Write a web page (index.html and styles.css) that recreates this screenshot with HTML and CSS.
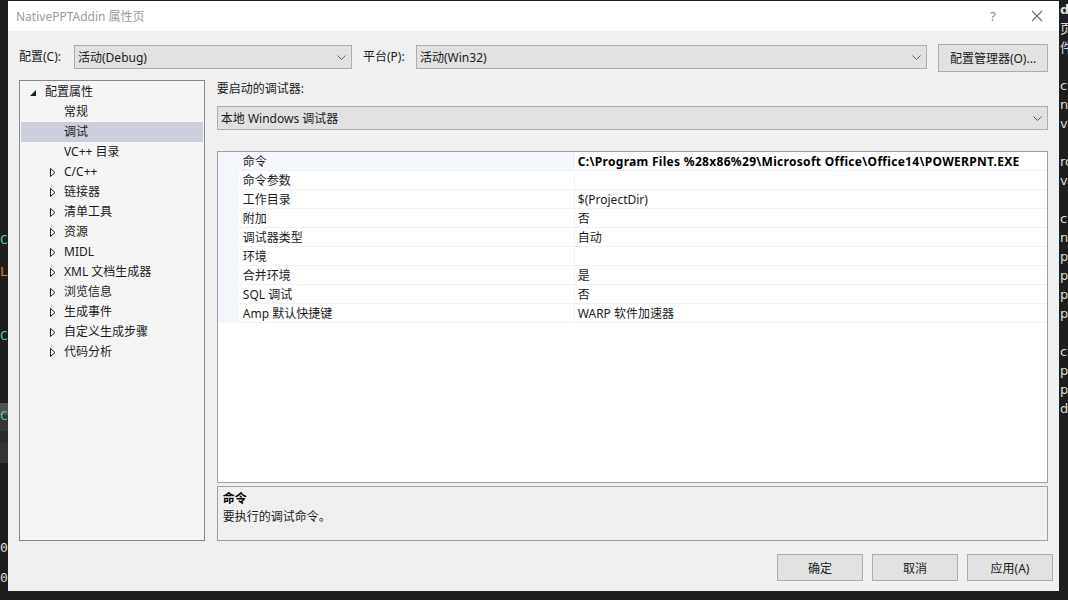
FILE: index.html
```html
<!DOCTYPE html>
<html lang="zh-CN">
<head>
    <meta charset="UTF-8">
    <title>NativePPTAddin 属性页</title>
    <link rel="stylesheet" href="styles.css">
</head>
<body>

    <!-- editor behind the dialog -->
    <div class="backdrop">
        <div class="band"></div>
        <span class="frag teal" style="top:232px">C</span>
        <span class="frag orange" style="top:264px">L</span>
        <span class="frag teal" style="top:328px">C</span>
        <span class="frag teal" style="top:408px">C</span>
        <span class="frag light" style="top:540px">0.</span>
        <span class="frag light" style="top:570px">0.</span>
        <div class="code-right">
            <span>d</span><span>页</span><span>件</span><span>&nbsp;</span><span>ct</span><span>n.</span><span>ve</span><span>&nbsp;</span><span>ro</span><span>ve</span><span>&nbsp;</span><span>ct</span><span>n.</span><span>p</span><span>p</span><span>p</span><span>p</span><span>&nbsp;</span><span>ct</span><span>p</span><span>p</span><span>d</span>
        </div>
    </div>

    <div class="dialog">
        <div class="titlebar">
            <span class="title">NativePPTAddin 属性页</span>
            <span class="tb-help">?</span>
            <span class="tb-close">
                <svg width="12" height="12" viewBox="0 0 12 12"><path d="M1 1 L11 11 M11 1 L1 11" stroke="#6d6d6d" stroke-width="1.1" fill="none"/></svg>
            </span>
        </div>

        <div class="body">
            <div class="config-row">
                <span class="field-label cfg-label">配置(C):</span>
                <div class="combo cfg-combo">
                    <span>活动(Debug)</span>
                    <svg class="chev" width="9" height="5" viewBox="0 0 9 5"><polyline points="0.5,0.5 4.5,4.5 8.5,0.5" stroke="#606060" fill="none"/></svg>
                </div>
                <span class="field-label plat-label">平台(P):</span>
                <div class="combo plat-combo">
                    <span>活动(Win32)</span>
                    <svg class="chev" width="9" height="5" viewBox="0 0 9 5"><polyline points="0.5,0.5 4.5,4.5 8.5,0.5" stroke="#606060" fill="none"/></svg>
                </div>
                <button class="btn mgr-btn">配置管理器(O)...</button>
            </div>

            <div class="main">
                <div class="tree">
                    <div class="node root">
                        <svg class="exp" width="6" height="6" viewBox="0 0 6 6"><polygon points="6,0 6,6 0,6" fill="#1e1e1e"/></svg>
                        <span>配置属性</span>
                    </div>
                    <div class="node leaf">常规</div>
                    <div class="node leaf selected">调试</div>
                    <div class="node leaf">VC++ 目录</div>
                    <div class="node branch"><svg class="col" width="6" height="9" viewBox="0 0 6 9"><polygon points="0.5,0.5 5,4.5 0.5,8.5" stroke="#1e1e1e" fill="none"/></svg><span>C/C++</span></div>
                    <div class="node branch"><svg class="col" width="6" height="9" viewBox="0 0 6 9"><polygon points="0.5,0.5 5,4.5 0.5,8.5" stroke="#1e1e1e" fill="none"/></svg><span>链接器</span></div>
                    <div class="node branch"><svg class="col" width="6" height="9" viewBox="0 0 6 9"><polygon points="0.5,0.5 5,4.5 0.5,8.5" stroke="#1e1e1e" fill="none"/></svg><span>清单工具</span></div>
                    <div class="node branch"><svg class="col" width="6" height="9" viewBox="0 0 6 9"><polygon points="0.5,0.5 5,4.5 0.5,8.5" stroke="#1e1e1e" fill="none"/></svg><span>资源</span></div>
                    <div class="node branch"><svg class="col" width="6" height="9" viewBox="0 0 6 9"><polygon points="0.5,0.5 5,4.5 0.5,8.5" stroke="#1e1e1e" fill="none"/></svg><span>MIDL</span></div>
                    <div class="node branch"><svg class="col" width="6" height="9" viewBox="0 0 6 9"><polygon points="0.5,0.5 5,4.5 0.5,8.5" stroke="#1e1e1e" fill="none"/></svg><span>XML 文档生成器</span></div>
                    <div class="node branch"><svg class="col" width="6" height="9" viewBox="0 0 6 9"><polygon points="0.5,0.5 5,4.5 0.5,8.5" stroke="#1e1e1e" fill="none"/></svg><span>浏览信息</span></div>
                    <div class="node branch"><svg class="col" width="6" height="9" viewBox="0 0 6 9"><polygon points="0.5,0.5 5,4.5 0.5,8.5" stroke="#1e1e1e" fill="none"/></svg><span>生成事件</span></div>
                    <div class="node branch"><svg class="col" width="6" height="9" viewBox="0 0 6 9"><polygon points="0.5,0.5 5,4.5 0.5,8.5" stroke="#1e1e1e" fill="none"/></svg><span>自定义生成步骤</span></div>
                    <div class="node branch"><svg class="col" width="6" height="9" viewBox="0 0 6 9"><polygon points="0.5,0.5 5,4.5 0.5,8.5" stroke="#1e1e1e" fill="none"/></svg><span>代码分析</span></div>
                </div>

                <div class="page">
                    <div class="page-label">要启动的调试器:</div>
                    <div class="combo debugger-combo">
                        <span>本地 Windows 调试器</span>
                        <svg class="chev" width="9" height="5" viewBox="0 0 9 5"><polyline points="0.5,0.5 4.5,4.5 8.5,0.5" stroke="#606060" fill="none"/></svg>
                    </div>

                    <div class="prop-grid">
                        <div class="row current"><div class="gutter"></div><div class="name">命令</div><div class="value bold">C:\Program Files %28x86%29\Microsoft Office\Office14\POWERPNT.EXE</div></div>
                        <div class="row"><div class="gutter"></div><div class="name">命令参数</div><div class="value"></div></div>
                        <div class="row"><div class="gutter"></div><div class="name">工作目录</div><div class="value">$(ProjectDir)</div></div>
                        <div class="row"><div class="gutter"></div><div class="name">附加</div><div class="value">否</div></div>
                        <div class="row"><div class="gutter"></div><div class="name">调试器类型</div><div class="value">自动</div></div>
                        <div class="row"><div class="gutter"></div><div class="name">环境</div><div class="value"></div></div>
                        <div class="row"><div class="gutter"></div><div class="name">合并环境</div><div class="value">是</div></div>
                        <div class="row"><div class="gutter"></div><div class="name">SQL 调试</div><div class="value">否</div></div>
                        <div class="row"><div class="gutter"></div><div class="name">Amp 默认快捷键</div><div class="value">WARP 软件加速器</div></div>
                    </div>

                    <div class="desc">
                        <div class="desc-title">命令</div>
                        <div class="desc-text">要执行的调试命令。</div>
                    </div>
                </div>
            </div>

            <div class="footer">
                <button class="btn">确定</button>
                <button class="btn">取消</button>
                <button class="btn">应用(A)</button>
            </div>
        </div>
    </div>

</body>
</html>
```

FILE: styles.css
```css
html, body {
    margin: 0;
    padding: 0;
}

body {
    width: 1068px;
    height: 600px;
    overflow: hidden;
    background: #1e1e1e;
    font-family: "Noto Sans", "Noto Sans CJK SC", sans-serif;
    font-size: 12px;
    color: #1b1b1b;
    position: relative;
}

/* --- editor showing around the dialog --- */
.backdrop {
    position: absolute;
    inset: 0;
}

.band {
    position: absolute;
    left: 0;
    top: 403px;
    width: 8px;
    height: 60px;
    background: linear-gradient(to bottom, #505050 0, #505050 12px, #383838 12px, #383838 28px, #2a2a2a 28px, #2a2a2a 40px, #333 40px);
}

.frag {
    position: absolute;
    left: 0;
    font-family: "DejaVu Sans Mono", monospace;
    font-size: 13px;
    line-height: 16px;
}

.teal { color: #4ec9b0; }
.orange { color: #d7794a; }
.light { color: #dcdcdc; }

.code-right {
    position: absolute;
    left: 1060px;
    top: 0;
    display: flex;
    flex-direction: column;
    font-family: "DejaVu Sans", "Noto Sans CJK SC", sans-serif;
    font-size: 13px;
    line-height: 19px;
    color: #dcdcdc;
}

.code-right span:first-child { font-weight: bold; }

/* --- dialog window --- */
.dialog {
    position: absolute;
    left: 8px;
    top: 1px;
    width: 1051px;
    height: 590px;
    background: #f0f0f0;
    display: flex;
    flex-direction: column;
}

.titlebar {
    height: 30px;
    background: #ffffff;
    display: flex;
    align-items: center;
    flex-shrink: 0;
}

.title {
    margin-left: 8px;
    color: #9a9a9a;
    font-size: 12px;
    flex: 1;
}

.tb-help {
    width: 20px;
    text-align: center;
    color: #8a8a8a;
    font-size: 13px;
    margin-right: 28px;
}

.tb-close {
    display: flex;
    margin-right: 16px;
}

.body {
    flex: 1;
    padding: 13px 11px 0 11px;
    display: flex;
    flex-direction: column;
}

/* --- configuration row --- */
.config-row {
    display: flex;
    align-items: flex-start;
    height: 28px;
}

.field-label {
    line-height: 26px;
    white-space: nowrap;
}

.cfg-label { width: 55px; }
.plat-label { width: 53px; margin-left: 11px; }

.combo {
    box-sizing: border-box;
    height: 24px;
    background: #e1e1e1;
    border: 1px solid #adadad;
    display: flex;
    align-items: center;
    justify-content: space-between;
    padding: 0 5px 0 3px;
}

.config-row .combo { margin-top: 1px; }

.cfg-combo { width: 278px; }
.plat-combo { width: 511px; }

.chev { flex-shrink: 0; }

.btn {
    box-sizing: border-box;
    height: 27px;
    background: #e1e1e1;
    border: 1px solid #adadad;
    font-family: inherit;
    font-size: 12px;
    color: #1b1b1b;
    padding: 0;
}

.mgr-btn {
    width: 110px;
    height: 28px;
    margin-left: 11px;
}

/* --- tree + page --- */
.main {
    display: flex;
    margin-top: 8px;
    height: 461px;
}

.tree {
    box-sizing: border-box;
    width: 186px;
    height: 461px;
    border: 1px solid #828790;
    background: #f5f5f5;
    padding-top: 1px;
}

.node {
    height: 20px;
    line-height: 20px;
    display: flex;
    align-items: center;
    white-space: nowrap;
    margin: 0 1px;
}

.root .exp { margin-left: 9px; margin-right: 9px; margin-top: 2px; }
.leaf { padding-left: 43px; }
.branch .col { margin-left: 29px; margin-right: 8px; }

.node.selected {
    background: #cccedb;
}

.page {
    margin-left: 12px;
    width: 832px;
    display: flex;
    flex-direction: column;
}

.page-label {
    height: 18px;
    line-height: 18px;
    margin-bottom: 8px;
}

.debugger-combo {
    width: 831px;
    margin-bottom: 21px;
}

/* --- property grid --- */
.prop-grid {
    box-sizing: border-box;
    height: 332px;
    border: 1px solid #a0a0a0;
    background: #ffffff;
}

.row {
    display: flex;
    height: 19px;
    line-height: 20px;
}

.row .gutter {
    width: 21px;
    flex-shrink: 0;
    background: #f4f7fb;
}

.row .name {
    width: 336px;
    box-sizing: border-box;
    padding-left: 4px;
    border-bottom: 1px solid #eef1f6;
    border-right: 1px solid #eef1f6;
}

.row .value {
    flex: 1;
    padding-left: 3px;
    white-space: nowrap;
    border-bottom: 1px solid #eef1f6;
}

.row.current .name {
    background: #f4f7fb;
}

.value.bold {
    font-weight: bold;
    color: #000;
    letter-spacing: 0.3px;
}

/* --- description pane --- */
.desc {
    box-sizing: border-box;
    margin-top: 3px;
    height: 55px;
    border: 1px solid #a0a0a0;
    background: #f0f0f0;
    padding: 3px 5px;
}

.desc-title {
    font-weight: bold;
    color: #000;
    line-height: 18px;
}

.desc-text {
    line-height: 18px;
}

/* --- dialog buttons --- */
.footer {
    display: flex;
    justify-content: flex-end;
    gap: 9px;
    margin-top: 13px;
    margin-right: -5px;
}

.footer .btn {
    width: 86px;
}
```
